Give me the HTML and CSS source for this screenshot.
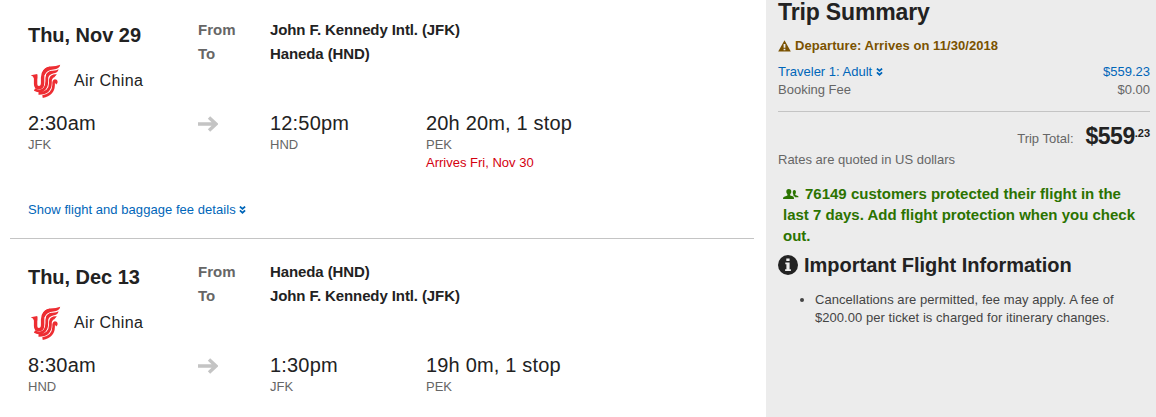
FILE: index.html
```html
<!DOCTYPE html>
<html lang="en">
<head>
    <meta charset="UTF-8">
    <meta name="viewport" content="width=device-width, initial-scale=1.0">
    <title>Trip Summary</title>
    <link rel="stylesheet" href="styles.css">
</head>
<body>
    <!-- shared icons -->
    <svg class="sprite">
        <symbol id="airchina" viewBox="0 0 36 36">
            <g fill="none" stroke="#ed2d32">
                <path stroke-width="3.4" d="M7.6 12V21Q7.6 24.6 10.8 24.6Q14.6 24.6 14.6 20V14.5Q14.6 7 22 5.2"/>
                <path stroke-width="2.8" d="M6.5 26.5Q13.2 29.6 16.6 25.6Q18.8 23 18.8 18V15Q19 10.5 24 9.2"/>
                <path stroke-width="2.8" d="M10.5 30.3Q22.2 30.6 22.4 20V17Q22.8 13.2 26.6 12.6"/>
                <path stroke-width="2.6" d="M14.5 33.6Q25.4 31.5 25.6 22V19.6Q26 16.9 28 18Q28.8 19.4 27.4 20.4"/>
            </g>
            <g fill="#ed2d32">
                <path d="M2.8 12.2L9.3 10.9V15.4H6Q5.4 13 2.8 12.2Z"/>
                <path d="M14 11Q15.5 4.5 22 3.6Q28.5 3.2 32.2 1.8Q31.5 6 25.5 6.6Q19 7 16.5 12Z"/>
                <path d="M18 12Q19.5 8 24.5 7.8Q29 7.4 30.6 6.2Q29.8 10 25 10.5Q21.5 11 20 14Z"/>
                <path d="M22 15Q23.5 11.6 28.8 11Q27.8 13.8 25.2 14.2L23.5 17Z"/>
            </g>
        </symbol>
        <symbol id="arrow" viewBox="0 0 20 16">
            <path d="M0 8H17M11 1.5L18 8L11 14.5" fill="none" stroke="#c4c4c4" stroke-width="3.4"/>
        </symbol>
        <symbol id="chevrons" viewBox="0 0 6 8">
            <path d="M.4 .6L3 2.9L5.6 .6M.4 4.4L3 6.7L5.6 4.4" fill="none" stroke="currentColor" stroke-width="1.8"/>
        </symbol>
    </svg>

    <div class="main">
        <div class="leg">
            <div class="head">
                <div class="when">
                    <h3>Thu, Nov 29</h3>
                    <div class="airline"><svg class="logo"><use href="#airchina"/></svg><span>Air China</span></div>
                </div>
                <div class="labels">From<br>To</div>
                <div class="airports">John F. Kennedy Intl. (JFK)<br>Haneda (HND)</div>
            </div>
            <div class="times">
                <div class="depart"><p class="time">2:30am</p><p class="code">JFK</p></div>
                <div class="arrowcol"><svg class="arrow"><use href="#arrow"/></svg></div>
                <div class="arrive"><p class="time">12:50pm</p><p class="code">HND</p></div>
                <div class="duration"><p class="time">20h 20m, 1 stop</p><p class="code">PEK</p><p class="late">Arrives Fri, Nov 30</p></div>
            </div>
            <a class="details">Show flight and baggage fee details <svg class="chev"><use href="#chevrons"/></svg></a>
        </div>
        <div class="leg">
            <div class="head">
                <div class="when">
                    <h3>Thu, Dec 13</h3>
                    <div class="airline"><svg class="logo"><use href="#airchina"/></svg><span>Air China</span></div>
                </div>
                <div class="labels">From<br>To</div>
                <div class="airports">Haneda (HND)<br>John F. Kennedy Intl. (JFK)</div>
            </div>
            <div class="times">
                <div class="depart"><p class="time">8:30am</p><p class="code">HND</p></div>
                <div class="arrowcol"><svg class="arrow"><use href="#arrow"/></svg></div>
                <div class="arrive"><p class="time">1:30pm</p><p class="code">JFK</p></div>
                <div class="duration"><p class="time">19h 0m, 1 stop</p><p class="code">PEK</p></div>
            </div>
        </div>
    </div>

    <div class="summary">
        <h2>Trip Summary</h2>
        <p class="warning"><svg class="warnicon" viewBox="0 0 13 12"><path fill="currentColor" fill-rule="evenodd" d="M6.5 0.3L12.8 11.5H.2ZM5.6 4V7.8H7.4V4ZM5.6 8.8V10.3H7.4V8.8Z"/></svg><span>Departure: Arrives on 11/30/2018</span></p>
        <div class="row blue"><span>Traveler 1: Adult <svg class="chev"><use href="#chevrons"/></svg></span><span>$559.23</span></div>
        <div class="row"><span>Booking Fee</span><span>$0.00</span></div>
        <div class="total"><span class="label">Trip Total:</span><span class="price">$559</span><span class="cents">.23</span></div>
        <p class="rates">Rates are quoted in US dollars</p>
        <p class="protect"><svg class="people" viewBox="0 0 16 10"><path fill="currentColor" d="M5.8 0C7.7 0 8.4 1.2 8.3 2.8C8.2 4.2 7.6 4.8 7.2 5.3V6.4L10.4 7.6Q11 8.2 11 10H0Q0 8.5 .7 8L4.4 6.4V5.3C4 4.8 3.4 4.2 3.3 2.8C3.2 1.2 4 0 5.8 0ZM11.3 1C12.6 1 13 2 12.9 3.2C12.8 4.2 12.6 4.7 12.3 5.1V5.9L15 7Q15.5 7.4 15.5 8.3H12Q11.6 7 10.3 6.4V5.2C9.6 4.5 9.4 1 11.3 1Z"/></svg>76149 customers protected their flight in the<br>last 7 days. Add flight protection when you check<br>out.</p>
        <h3 class="important"><svg class="info" viewBox="0 0 20 20"><circle cx="10" cy="10" r="10" fill="#222"/><path fill="#ececec" d="M8.3 3.4H11.6V6H8.3ZM7.3 7.5H11.6V14.2H12.9V16H7.1V14.2H8.4V9.2H7.3Z"/></svg><span>Important Flight Information</span></h3>
        <ul>
            <li>Cancellations are permitted, fee may apply. A fee of<br>$200.00 per ticket is charged for itinerary changes.</li>
        </ul>
    </div>
</body>
</html>
```
FILE: styles.css
```css
* {
    box-sizing: border-box;
    margin: 0;
    padding: 0;
}

body {
    display: flex;
    height: 417px;
    overflow: hidden;
    background: #fff;
    color: #222;
    font-family: "Helvetica Neue", "Liberation Sans", Arial, sans-serif;
    font-size: 13px;
    line-height: 18px;
}

.sprite {
    position: absolute;
    width: 0;
    height: 0;
}

.main {
    width: 766px;
    padding: 0 12px 0 10px;
}

.leg {
    height: 239px;
    margin-bottom: 3px;
    padding: 18px 0 0 18px;
    border-bottom: 1px solid #c4c4c4;
}

.leg:last-child {
    height: 175px;
    margin-bottom: 0;
    border-bottom: none;
}

.head {
    display: flex;
    height: 93px;
    font-size: 15px;
    line-height: 24px;
    font-weight: bold;
}

.when {
    width: 170px;
    padding-top: 5px;
}

.when h3 {
    font-size: 20px;
    letter-spacing: -0.03px;
}

.airline {
    display: flex;
    align-items: center;
    gap: 10px;
    height: 36px;
    margin-top: 16px;
    font-size: 16px;
    font-weight: normal;
    letter-spacing: 0.4px;
}

.logo {
    width: 36px;
    height: 36px;
}

.labels {
    width: 72px;
    color: #666;
}

.airports {
    letter-spacing: -0.1px;
}

.times {
    display: flex;
    height: 64px;
}

.depart {
    width: 170px;
}

.arrowcol {
    width: 72px;
    padding-top: 5px;
}

.arrow {
    display: block;
    width: 20px;
    height: 16px;
}

.arrive {
    width: 156px;
}

.time {
    height: 25px;
    font-size: 20px;
    line-height: 24px;
    letter-spacing: 0.18px;
}

.code {
    color: #666;
}

.late {
    color: #d4000f;
}

.details {
    display: block;
    margin-top: 26px;
    letter-spacing: 0.05px;
}

.details,
.blue {
    color: #0066b9;
}

.chev {
    width: 7px;
    height: 8px;
}

.summary {
    width: 390px;
    padding: 0 6px 0 12px;
    background: #ececec;
    color: #666;
}

.summary h2 {
    height: 37px;
    color: #222;
    font-size: 23px;
    line-height: 24px;
    letter-spacing: -0.15px;
}

.warning {
    display: flex;
    align-items: center;
    gap: 4px;
    height: 18px;
    margin-bottom: 8px;
    color: #7a5200;
    font-weight: bold;
    letter-spacing: 0.06px;
}

.warnicon {
    width: 13px;
    height: 12px;
}

.row {
    display: flex;
    justify-content: space-between;
}

.summary .blue {
    color: #0066b9;
}

.total {
    display: flex;
    justify-content: flex-end;
    height: 40px;
    margin-top: 12px;
    padding-top: 12px;
    border-top: 1px solid #c4c4c4;
}

.label {
    margin: 6px 12px 0 0;
}

.price {
    color: #222;
    font-size: 23px;
    font-weight: bold;
    line-height: 24px;
    letter-spacing: -0.5px;
}

.cents {
    color: #222;
    font-size: 11px;
    font-weight: bold;
}

.protect {
    margin: 14px 0 0 5px;
    color: #2b7300;
    font-size: 15px;
    font-weight: bold;
    line-height: 21px;
    white-space: nowrap;
}

.people {
    width: 16px;
    height: 10px;
    margin-right: 6px;
}

.important {
    display: flex;
    align-items: center;
    gap: 6px;
    height: 24px;
    margin-top: 7px;
    color: #222;
    font-size: 20px;
    white-space: nowrap;
}

.info {
    width: 20px;
    height: 20px;
}

.summary ul {
    margin: 14px 0 0 37px;
    color: #444;
    letter-spacing: 0.05px;
    white-space: nowrap;
}
```
